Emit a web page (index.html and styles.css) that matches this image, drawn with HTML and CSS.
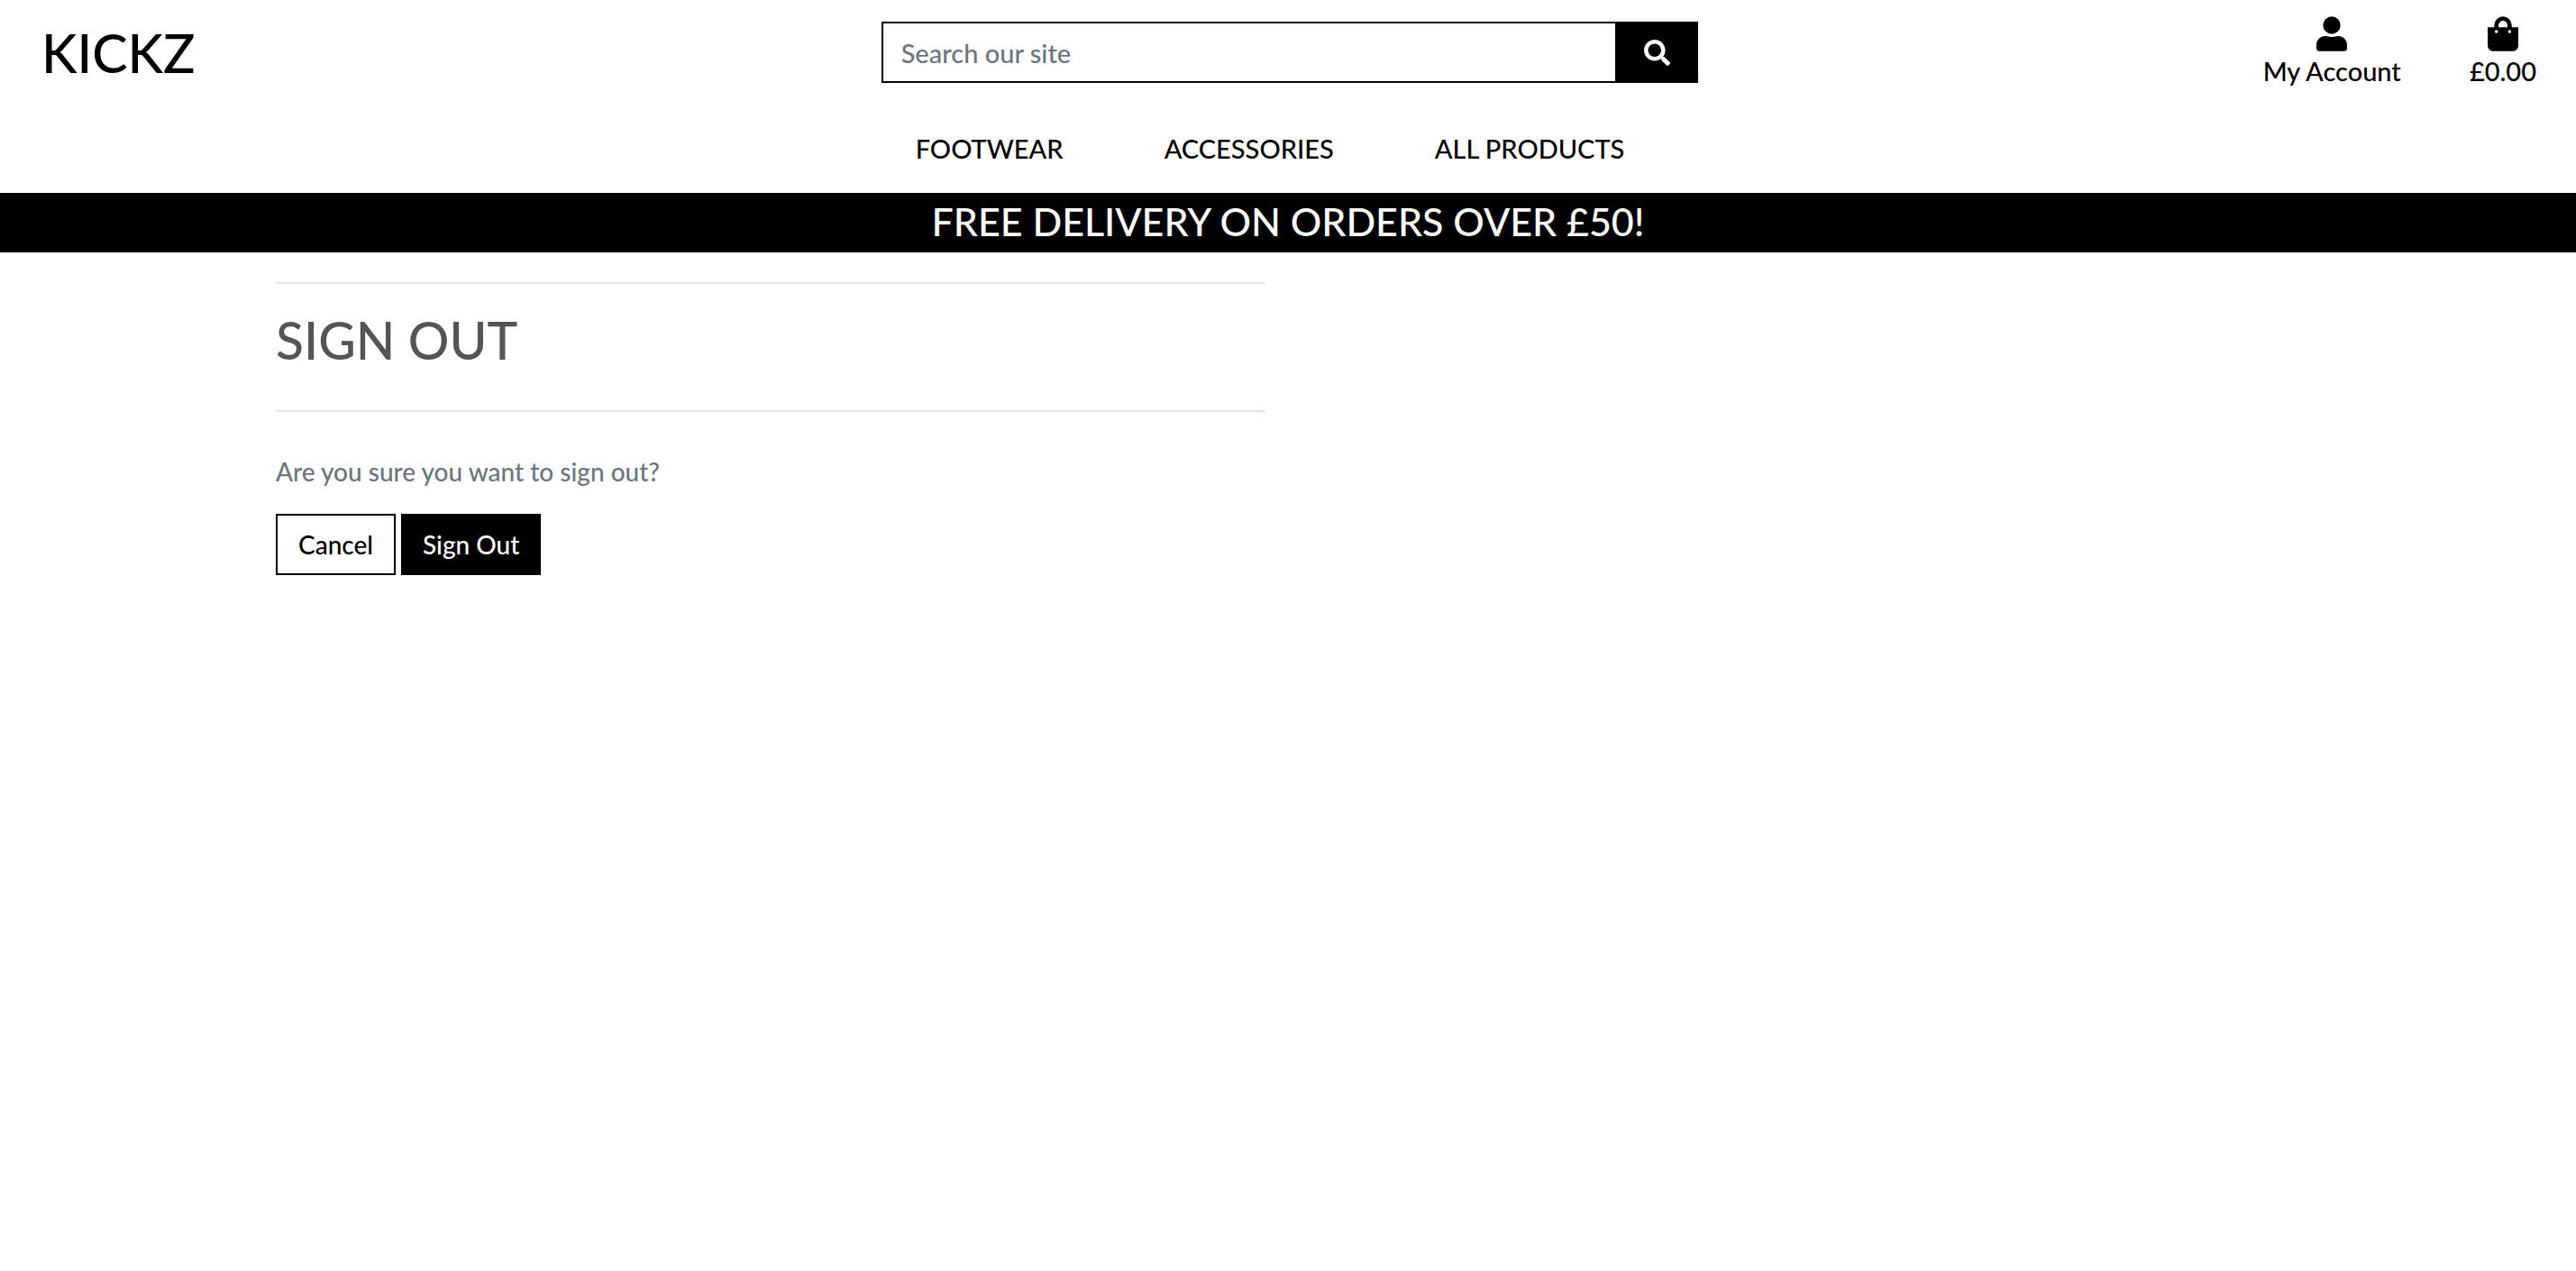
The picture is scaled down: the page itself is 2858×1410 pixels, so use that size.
FILE: index.html
```html
<!DOCTYPE html>
<html lang="en">
<head>
  <meta charset="utf-8">
  <meta name="viewport" content="width=device-width, initial-scale=1">
  <title>KICKZ</title>
  <link rel="stylesheet" href="styles.css">
</head>
<body>
  <header>
    <div class="top-bar">
      <a class="logo" href="#">KICKZ</a>
      <form class="search" role="search">
        <input class="search-input" type="text" name="q" placeholder="Search our site" aria-label="Search our site">
        <button class="search-button" type="submit" aria-label="Search">
          <svg class="search-icon" viewBox="0 0 512 512" aria-hidden="true"><path d="M505 442.700L405.300 343c-4.500-4.500-10.600-7-17-7H372c27.600-35.300 44-79.700 44-128C416 93.100 322.900 0 208 0S0 93.100 0 208s93.100 208 208 208c48.300 0 92.700-16.400 128-44v16.300c0 6.400 2.500 12.500 7 17l99.700 99.700c9.400 9.400 24.600 9.400 33.900 0l28.300-28.300c9.400-9.400 9.400-24.600.1-34zM208 336c-70.700 0-128-57.200-128-128 0-70.700 57.200-128 128-128 70.700 0 128 57.200 128 128 0 70.700-57.200 128-128 128z"/></svg>
        </button>
      </form>
      <div class="user-links">
        <a class="user-link" href="#">
          <svg class="user-icon" viewBox="0 0 34 39" aria-hidden="true"><circle cx="17" cy="10" r="9.700"/><path d="M10 22c2.500 0 3.500 1 7 1s4.500-1 7-1c6 0 10 4.500 10 10v3.500c0 2-1.300 3.300-3.300 3.300H3.300C1.300 38.800 0 37.500 0 35.500V32c0-5.500 4-10 10-10z"/></svg>
          <span>My Account</span>
        </a>
        <a class="user-link" href="#">
          <svg class="user-icon" viewBox="0 0 34 39" aria-hidden="true"><path fill-rule="evenodd" d="M0 12.200h7.300V10a9.700 9.700 0 0 1 19.400 0v2.200H34v20.300c0 3.500-2.800 6.300-6.300 6.300H6.300C2.800 38.800 0 36 0 32.500zM12.100 12.200h9.800V10a4.900 4.900 0 0 0-9.800 0zM9.700 15.200a1.800 1.800 0 1 0 0 3.600 1.800 1.800 0 0 0 0-3.600zM24.300 15.200a1.800 1.800 0 1 0 0 3.600 1.800 1.800 0 0 0 0-3.600z"/></svg>
          <span>£0.00</span>
        </a>
      </div>
    </div>
    <nav class="main-nav">
      <a href="#">FOOTWEAR</a>
      <a href="#">ACCESSORIES</a>
      <a href="#">ALL PRODUCTS</a>
    </nav>
    <p class="banner">FREE DELIVERY ON ORDERS OVER £50!</p>
  </header>
  <main class="container">
    <section class="panel">
      <h1 class="title">SIGN OUT</h1>
      <p class="question">Are you sure you want to sign out?</p>
      <form class="actions">
        <a class="button" href="#">Cancel</a>
        <button class="button button-dark" type="submit">Sign Out</button>
      </form>
    </section>
  </main>
</body>
</html>
```
FILE: styles.css
```css
* {
  box-sizing: border-box;
}

body {
  margin: 0;
  background: #fff;
  color: #000;
  font-family: Lato, "Liberation Sans", sans-serif;
  font-size: 28px;
  font-weight: 500;
  line-height: 44px;
}

a {
  color: inherit;
  text-decoration: none;
}

.top-bar {
  display: grid;
  grid-template-columns: 1fr 1fr 1fr;
  align-items: start;
  height: 120px;
  font-size: 29px;
}

.logo {
  padding: 23px 0 0 46px;
  font-size: 59px;
  line-height: 72px;
}

.search {
  display: flex;
  margin: 24px 21px 0 25px;
}

.search-input {
  flex: 1;
  min-width: 0;
  height: 68px;
  padding: 0 20px;
  border: 2px solid #000;
  border-right: 0;
  border-radius: 0;
  background: #fff;
  font: inherit;
}

.search-input::placeholder {
  color: #6c757d;
  opacity: 1;
}

.search-button {
  display: flex;
  align-items: center;
  justify-content: center;
  width: 92px;
  height: 68px;
  padding: 0;
  border: 0;
  background: #000;
}

.search-icon {
  width: 29px;
  height: 29px;
  fill: #fff;
}

.user-links {
  display: flex;
  justify-content: flex-end;
  gap: 76px;
  padding: 18px 44px 0 0;
}

.user-link {
  display: flex;
  flex-direction: column;
  align-items: center;
}

.user-icon {
  width: 34px;
  height: 39px;
}

.main-nav {
  display: flex;
  justify-content: center;
  gap: 112px;
  padding: 23px 40px 27px 0;
  font-size: 29px;
}

.banner {
  margin: 0;
  padding-bottom: 2px;
  background: #000;
  color: #fff;
  font-size: 43px;
  line-height: 64px;
  text-align: center;
}

.container {
  max-width: 2280px;
  margin: 0 auto;
  padding: 33px 17px;
}

.panel {
  width: 1098px;
  max-width: 100%;
}

.title {
  margin: 0 0 44px;
  padding: 26px 0 42px;
  border: 2px solid #e5e5e5;
  border-width: 2px 0;
  color: #555;
  font-size: 57px;
  font-weight: 500;
  line-height: 72px;
}

.question {
  margin: 0 0 25px;
  color: #6c757d;
}

.actions {
  display: flex;
  gap: 6px;
}

.button {
  height: 68px;
  padding: 0 23px;
  border: 2px solid #000;
  background: #fff;
  font: inherit;
  line-height: 64px;
}

.button-dark {
  padding: 0 22px;
  background: #000;
  color: #fff;
}
```
